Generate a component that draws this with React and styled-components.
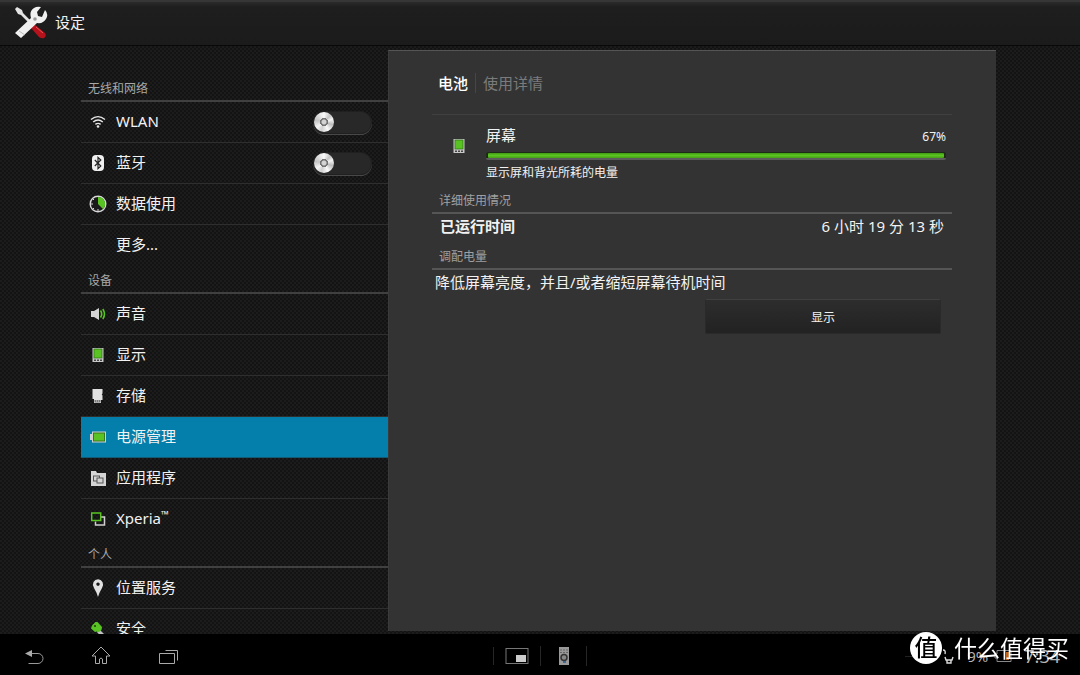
import React, { useState } from "react";
import styled, { createGlobalStyle, css } from "styled-components";

const GlobalStyle = createGlobalStyle`
  * {
    box-sizing: border-box;
  }
  body {
    margin: 0;
    background: #000;
    color: #f2f2f2;
    font-family: "Noto Sans", "Noto Sans CJK SC", sans-serif;
    font-size: 15px;
    line-height: 20px;
  }
`;

const Screen = styled.div`
  display: flex;
  flex-direction: column;
  height: 100vh;
  overflow: hidden;
  background: repeating-conic-gradient(#131313 0 25%, #1c1c1c 0 50%) 0 0 / 4px 4px;
`;
const Header = styled.header`
  display: flex;
  flex: none;
  align-items: center;
  gap: 7px;
  height: 46px;
  padding: 0 14px 2px;
  background: linear-gradient(#2b2b2b, #1e1e1e 12%, #1b1b1b);
  border-top: 2px solid #363636;
  border-bottom: 1px solid #080808;
`;
const HeaderTitle = styled.h1`
  margin: 0;
  padding-bottom: 2px;
  font-size: 15px;
  font-weight: 400;
`;
const Content = styled.div`
  display: flex;
  flex: 1;
  min-height: 0;
  padding: 0 84px 0 81px;
`;

const Sidebar = styled.nav`
  flex: none;
  width: 307px;
  padding-top: 28px;
  overflow: hidden;
`;
const SectionTitle = styled.h2`
  height: 28px;
  margin: 0;
  padding: 5px 7px 0;
  border-bottom: 2px solid #404040;
  color: #a8a8a8;
  font-size: 12px;
  font-weight: 400;
`;
const List = styled.ul`
  margin: 0;
  padding: 0;
  list-style: none;
`;
const Item = styled.li`
  display: flex;
  align-items: center;
  height: 41px;
  padding-right: 17px;
  border-bottom: 1px solid #2e2e2e;
  &:last-child {
    border-bottom-color: transparent;
  }
  ${(props) =>
    props.$active &&
    css`
      background: #047eaa;
      border-bottom-color: #125a75;
    `}
`;
const ItemLink = styled.a`
  display: flex;
  flex: 1;
  align-items: center;
  gap: 9px;
  padding-left: 8px;
  color: inherit;
  text-decoration: none;
`;
const IconBox = styled.span`
  display: flex;
  width: 18px;
  height: 18px;
`;
const ItemLabel = styled.span`
  padding-bottom: 2px;
`;
const Trademark = styled.sup`
  font-size: 10px;
  line-height: 0;
`;

const SwitchTrack = styled.label`
  display: flex;
  width: 57px;
  height: 21px;
  border-radius: 11px;
  background: #282828;
  box-shadow: 0 0 0 1px #202020, 0 1px 0 1px #484848;
`;
const SwitchInput = styled.input`
  appearance: none;
  width: 20px;
  height: 20px;
  margin: 0;
  border-radius: 50%;
  background: radial-gradient(
      circle,
      #d4d4d4 0 2px,
      #747474 3px 4px,
      transparent 4px
    ),
    conic-gradient(
      #fafafa,
      #c4c4c4 12%,
      #f4f4f4 20%,
      #bdbdbd 30%,
      #fafafa 42%,
      #d0d0d0 55%,
      #f4f4f4 65%,
      #c4c4c4 78%,
      #fafafa
    );
  &:checked {
    margin-left: auto;
  }
`;

const Panel = styled.main`
  flex: 1;
  min-width: 0;
  margin: 4px 0 3px;
  padding: 0 44px 0 43px;
  background: #333;
  border-top: 1px solid #555;
  border-left: 1px solid #3b3b3b;
`;
const Breadcrumb = styled.div`
  display: flex;
  align-items: center;
  height: 64px;
  padding-left: 6px;
  border-bottom: 1px solid #404040;
`;
const Crumb = styled.h2`
  margin: 0;
  padding-right: 7px;
  border-right: 1px solid #464646;
  color: #fff;
  font-size: 15px;
  font-weight: 500;
`;
const SubCrumb = styled.span`
  padding-left: 7px;
  color: #7b7b7b;
`;
const Usage = styled.section`
  display: flex;
  align-items: flex-start;
  gap: 18px;
  height: 75px;
  padding: 10px 6px 0 18px;
`;
const UsageIcon = styled.span`
  display: flex;
  padding-top: 12px;
`;
const UsageBody = styled.div`
  flex: 1;
`;
const UsageHead = styled.div`
  display: flex;
  align-items: baseline;
  justify-content: space-between;
`;
const Small = styled.span`
  font-size: 12px;
`;
const UsageNote = styled.p`
  margin: 3px 0 0;
  font-size: 12px;
`;
const Meter = styled.progress`
  display: block;
  width: 100%;
  height: 8px;
  margin-top: 5px;
  appearance: none;
  &::-webkit-progress-bar {
    padding: 1px 2px 2px;
    border-radius: 2px;
    background: linear-gradient(#1c2a17 0 6px, #5c5c5c 6px);
  }
  &::-webkit-progress-value {
    border-radius: 1px;
    background: linear-gradient(#3f9b12, #5cc422 50%, #44a016);
  }
`;
const GroupTitle = styled.h3`
  height: 24px;
  margin: 0;
  padding: 1px 7px 0;
  border-bottom: 2px solid #555;
  color: #a0a0a0;
  font-size: 12px;
  font-weight: 400;
`;
const Stats = styled.dl`
  display: flex;
  justify-content: space-between;
  height: 32px;
  margin: 0;
  padding: 2px 8px 0;
`;
const StatName = styled.dt`
  font-weight: 700;
`;
const StatValue = styled.dd`
  margin: 0;
`;
const Advice = styled.p`
  margin: 0;
  padding: 2px 3px 7px;
`;
const ActionButton = styled.button`
  display: block;
  width: 236px;
  height: 35px;
  margin: 0 11px 0 auto;
  border: 1px solid #2a2a2a;
  border-top-color: #404040;
  border-radius: 2px;
  background: linear-gradient(#2d2d2d, #222);
  color: inherit;
  font-family: inherit;
  font-size: 12px;
`;

const SystemBar = styled.footer`
  display: grid;
  grid-template-columns: 1fr auto 1fr;
  flex: none;
  align-items: center;
  height: 41px;
  padding: 2px 20px 0;
  background: #000;
`;
const NavKeys = styled.div`
  display: flex;
  gap: 39px;
`;
const BarButton = styled.button`
  display: flex;
  padding: 0;
  border: 0;
  background: none;
`;
const SmallApps = styled.div`
  display: flex;
  align-items: center;
`;
const AppSlot = styled.div`
  display: flex;
  justify-content: center;
  width: 47px;
  border-left: 1px solid #262626;
  &:last-child {
    border-right: 1px solid #262626;
  }
`;
const Status = styled.div`
  display: flex;
  align-items: center;
  justify-content: flex-end;
  gap: 6px;
  color: #b4b4b4;
`;
const Clock = styled.time`
  margin-left: 6px;
  font-size: 18px;
`;
const Watermark = styled.div`
  position: fixed;
  right: 11px;
  bottom: 10px;
  display: flex;
  align-items: center;
  gap: 12px;
  color: #fff;
  font-size: 23px;
  line-height: 34px;
`;
const Seal = styled.span`
  width: 32px;
  height: 32px;
  border-radius: 50%;
  background: #fff;
  color: #000;
  font-weight: 500;
  font-style: oblique 6deg;
  line-height: 31px;
  text-align: center;
`;

const Icon = ({ size = 18, children }) => (
  <svg width={size} height={size} viewBox="0 0 18 18" fill="none" aria-hidden="true">
    {children}
  </svg>
);

const ToolsIcon = () => (
  <svg width="34" height="34" viewBox="0 0 34 34" aria-hidden="true">
    <path d="M1 3l2-2 5 3 1 3 9 9-2 2-9-9-3-1z" fill="#e4e4e4" />
    <path d="M20 18l11 9q2 3-1 5-2 1-5-1l-8-9z" fill="#b5121b" />
    <path d="M22 21l7 6" stroke="#e8545a" strokeWidth="1" />
    <path
      d="M1 27L17 12Q15 5 20 2Q23 0 27 1L23 6L24 10L28 11L31 4Q35 8 32 13Q29 18 23 17L7 32Z"
      fill="#f0f0f0"
    />
    <circle cx="21" cy="13" r="1.800" fill="#999" />
    <path d="M5 25l6 4" stroke="#bbb" />
  </svg>
);

const WifiIcon = () => (
  <Icon>
    <g stroke="#e8e8e8" strokeWidth="1.4">
      <path d="M2 6.500q7-5.800 14 0" />
      <path d="M4.200 9q4.800-4 9.600 0" />
      <path d="M6.400 11.400q2.600-2 5.200 0" />
    </g>
    <circle cx="9" cy="13.500" r="1.300" fill="#e8e8e8" />
  </Icon>
);
const BluetoothIcon = () => (
  <Icon>
    <rect x="3" y="1" width="12" height="16" rx="4" fill="#f0f0f0" />
    <path d="M5.800 6l6 6L9 14.600V3.400L11.800 6l-6 6" stroke="#222" strokeWidth="1.200" />
  </Icon>
);
const DataIcon = () => (
  <Icon>
    <circle cx="9" cy="9" r="7.800" fill="#1a1a1a" stroke="#d8d8d8" strokeWidth="1.400" />
    <path d="M9 9V2a7 7 0 0 1 5 12z" fill="#58c322" />
    <path
      d="M9 16v-2M2 9h2M4 4l1 1M4 14l1-1"
      stroke="#d8d8d8"
    />
  </Icon>
);
const SoundIcon = () => (
  <Icon>
    <path d="M2 6h3L10 3v12l-5-3H2z" fill="#d4d4d4" />
    <path d="M11.500 5.500q2.400 3.500 0 7M13.800 4q3.400 5 0 10" stroke="#58c322" strokeWidth="1.600" />
  </Icon>
);
const DisplayIcon = () => (
  <Icon>
    <rect x="3.500" y="2" width="11" height="14" fill="#c8c8c8" />
    <rect x="5" y="3" width="8" height="9" fill="#58c322" stroke="#2d6d10" strokeWidth=".7" />
    <path d="M5 14.300h2M8 14.300h2M11 14.300h2" stroke="#444" strokeWidth="1.400" />
  </Icon>
);
const StorageIcon = () => (
  <Icon>
    <path d="M3.500 2h10v4.500l-.8 1 .8 1V13H12v3H5v-4H3.500z" fill="#e0e0e0" />
    <path d="M5.500 13h6v2.500h-6z" fill="#777" />
    <path d="M7.500 13v2M9.500 13v2" stroke="#ccc" strokeWidth=".6" />
  </Icon>
);
const BatteryIcon = () => (
  <Icon>
    <path d="M3 3.500h14v11H3V12H1V6h2z" fill="#d0d0d0" />
    <rect x="4.500" y="5" width="11" height="8" fill="#58c322" stroke="#38771c" />
  </Icon>
);
const AppsIcon = () => (
  <Icon>
    <path d="M2 2h5l1 2h9v13H2z" fill="#d4d4d4" />
    <rect x="4.500" y="7" width="6" height="5" stroke="#555" />
    <rect x="8" y="9" width="6" height="5" fill="#d4d4d4" stroke="#555" />
  </Icon>
);
const XperiaIcon = () => (
  <Icon>
    <path d="M12 7h3.500v8h-9v-3.500" stroke="#d0d0d0" strokeWidth="1.500" />
    <rect x="2.700" y="3" width="9" height="7.500" stroke="#58c322" strokeWidth="1.500" />
  </Icon>
);
const LocationIcon = () => (
  <Icon>
    <path
      d="M9 18Q8 14 5 9Q3 6 4.500 3Q6 .3 9 .3T13.500 3Q15 6 13 9Q10 14 9 18zM9 3.400a1.700 1.700 0 1 0 .01 0z"
      fill="#e0e0e0"
      fillRule="evenodd"
    />
  </Icon>
);
const SecurityIcon = () => (
  <Icon>
    <path d="M10 9l6 6v3h-3l-5-6z" fill="#c0c0c0" />
    <path d="M2 8.500l1-3L6.500 2h2L13 7l-.5 3L10 12l-2-.5-2 .5z" fill="#58c322" />
    <circle cx="6" cy="6" r="1" fill="#1b3b0c" />
  </Icon>
);

const sections = [
  {
    title: "无线和网络",
    items: [
      { label: "WLAN", icon: <WifiIcon />, toggle: true },
      { label: "蓝牙", icon: <BluetoothIcon />, toggle: true },
      { label: "数据使用", icon: <DataIcon /> },
      { label: "更多..." },
    ],
  },
  {
    title: "设备",
    items: [
      { label: "声音", icon: <SoundIcon /> },
      { label: "显示", icon: <DisplayIcon /> },
      { label: "存储", icon: <StorageIcon /> },
      { label: "电源管理", icon: <BatteryIcon />, active: true },
      { label: "应用程序", icon: <AppsIcon /> },
      { label: "Xperia", icon: <XperiaIcon />, trademark: true },
    ],
  },
  {
    title: "个人",
    items: [
      { label: "位置服务", icon: <LocationIcon /> },
      { label: "安全", icon: <SecurityIcon /> },
    ],
  },
];

function Switch({ label }) {
  const [on, setOn] = useState(false);
  return (
    <SwitchTrack>
      <SwitchInput
        type="checkbox"
        aria-label={label}
        checked={on}
        onChange={() => setOn(!on)}
      />
    </SwitchTrack>
  );
}

function MenuItem({ item }) {
  return (
    <Item $active={item.active}>
      <ItemLink href="#" aria-current={item.active ? "page" : undefined}>
        <IconBox>{item.icon}</IconBox>
        <ItemLabel>
          {item.label}
          {item.trademark ? <Trademark>™</Trademark> : null}
        </ItemLabel>
      </ItemLink>
      {item.toggle ? <Switch label={item.label} /> : null}
    </Item>
  );
}

function BatteryDetails() {
  return (
    <Panel>
      <Breadcrumb>
        <Crumb>电池</Crumb>
        <SubCrumb>使用详情</SubCrumb>
      </Breadcrumb>
      <Usage>
        <UsageIcon>
          <DisplayIcon />
        </UsageIcon>
        <UsageBody>
          <UsageHead>
            <label htmlFor="usage">屏幕</label>
            <Small>67%</Small>
          </UsageHead>
          <Meter id="usage" value="100" max="100" />
          <UsageNote>显示屏和背光所耗的电量</UsageNote>
        </UsageBody>
      </Usage>
      <GroupTitle>详细使用情况</GroupTitle>
      <Stats>
        <StatName>已运行时间</StatName>
        <StatValue>6 小时 19 分 13 秒</StatValue>
      </Stats>
      <GroupTitle>调配电量</GroupTitle>
      <Advice>降低屏幕亮度，并且/或者缩短屏幕待机时间</Advice>
      <ActionButton type="button">显示</ActionButton>
    </Panel>
  );
}

function NavigationBar() {
  return (
    <SystemBar>
      <NavKeys>
        <BarButton type="button" aria-label="返回">
          <svg width="28" height="20" viewBox="0 0 28 20" fill="none">
            <path d="M10 7.500h8a5 5 0 0 1 0 10H8.500" stroke="#999" />
            <path d="M5 7.500L12 4v7z" fill="#aaa" />
          </svg>
        </BarButton>
        <BarButton type="button" aria-label="主屏幕">
          <svg width="28" height="20" viewBox="0 0 28 20" fill="none">
            <path
              d="M14 1l9 9h-3.500v7.500h-4V13q-1.500-2-3 0v4.500h-4V10H5z"
              stroke="#aaa"
            />
          </svg>
        </BarButton>
        <BarButton type="button" aria-label="最近使用">
          <svg width="28" height="20" viewBox="0 0 28 20" fill="none">
            <path d="M5.500 7.500h15v10h-15zM11.500 4.500h12v10" stroke="#aaa" />
          </svg>
        </BarButton>
      </NavKeys>
      <SmallApps>
        <AppSlot>
          <BarButton type="button" aria-label="小应用">
            <svg width="24" height="18" viewBox="0 0 24 18" fill="none">
              <rect x="1" y="1.500" width="22" height="15" stroke="#777" />
              <rect x="11" y="8" width="10" height="7" fill="#ccc" />
            </svg>
          </BarButton>
        </AppSlot>
        <AppSlot>
          <BarButton type="button" aria-label="遥控器">
            <svg width="12" height="20" viewBox="0 0 12 20" fill="none">
              <rect x="1" y="1" width="10" height="18" fill="#999" />
              <path d="M2 4h8M2 6.500h8" stroke="#666" strokeDasharray="2 1" />
              <circle cx="6" cy="11.500" r="3" fill="#888" stroke="#333" strokeWidth="1.500" />
              <path d="M5 16h3" stroke="#28578f" strokeWidth="1.500" />
            </svg>
          </BarButton>
        </AppSlot>
      </SmallApps>
      <Status>
        <svg width="56" height="20" viewBox="0 0 56 20" fill="none">
          <path d="M0 10.500h10" stroke="#222" />
          <path d="M38 4q3 0 2 4M40 11l1 3h6l1-3M42 14v3h4v-3" stroke="#ddd" strokeWidth="1.400" />
        </svg>
        <span>9%</span>
        <svg width="18" height="14" viewBox="0 0 18 14" fill="none">
          <path d="M3 1.500h14v11H3V9H1V5h2z" stroke="#888" />
          <path d="M12 3h3v8h-3z" fill="#c0641c" />
        </svg>
        <Clock>7:34</Clock>
      </Status>
    </SystemBar>
  );
}

function App() {
  return (
    <Screen>
      <GlobalStyle />
      <Header>
        <ToolsIcon />
        <HeaderTitle>设定</HeaderTitle>
      </Header>
      <Content>
        <Sidebar>
          {sections.map((section) => (
            <section key={section.title}>
              <SectionTitle>{section.title}</SectionTitle>
              <List>
                {section.items.map((item) => (
                  <MenuItem key={item.label} item={item} />
                ))}
              </List>
            </section>
          ))}
        </Sidebar>
        <BatteryDetails />
      </Content>
      <NavigationBar />
      <Watermark>
        <Seal>值</Seal>
        <span>什么值得买</span>
      </Watermark>
    </Screen>
  );
}

export default App;
